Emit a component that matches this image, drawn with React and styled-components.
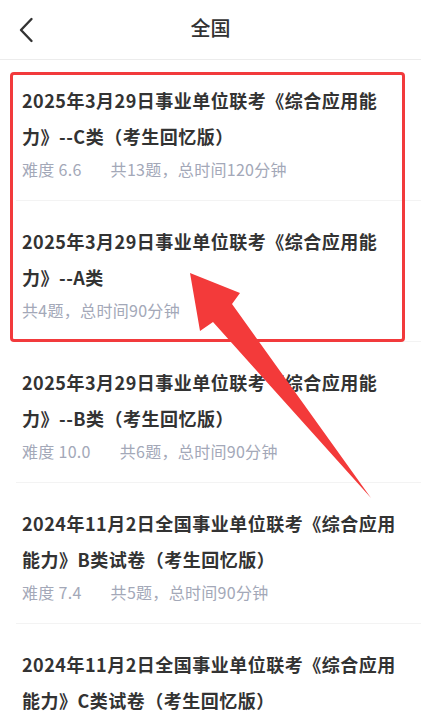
import React from "react";
import styled, { createGlobalStyle } from "styled-components";

const GlobalStyle = createGlobalStyle`
  html, body { margin: 0; padding: 0; background: #ffffff; }
  body { font-family: "Noto Sans CJK SC", "Noto Sans", sans-serif; }
  * { box-sizing: border-box; }
`;

const Page = styled.div`
  position: relative;
  width: 421px;
  height: 720px;
  overflow: hidden;
  background: #fff;
`;

const Header = styled.header`
  height: 60px;
  display: grid;
  grid-template-columns: 60px 1fr 60px;
  align-items: center;
  border-bottom: 1px solid #ececec;
`;

const BackButton = styled.button`
  border: 0;
  background: none;
  padding: 0 0 0 18px;
  height: 100%;
  display: flex;
  align-items: center;
  color: #333;
  cursor: pointer;
`;

const Title = styled.h1`
  margin: 0 0 3px;
  text-align: center;
  font-size: 20px;
  font-weight: 500;
  color: #333;
  line-height: 1;
`;

const List = styled.ul`
  list-style: none;
  margin: 0;
  padding: 0;
`;

const Item = styled.li`
  margin-left: 16px;
  padding: 22px 21px 19px 6px;
  border-bottom: 1px solid #f3f3f3;
`;

const ItemTitle = styled.div`
  font-size: 18px;
  font-weight: 700;
  line-height: 36px;
  color: #333;
  letter-spacing: 0.5px;
  line-break: strict;
`;

const Meta = styled.div`
  margin-top: 3px;
  display: flex;
  font-size: 16px;
  line-height: 24px;
  color: #a3a8b8;
  letter-spacing: 0.3px;
`;

const Difficulty = styled.span`
  margin-right: 29px;
`;

const Highlight = styled.div`
  position: absolute;
  left: 10px;
  top: 72px;
  width: 395px;
  height: 270px;
  border: 3px solid #f23a3c;
  border-radius: 4px;
  pointer-events: none;
`;

const ArrowLayer = styled.svg`
  position: absolute;
  left: 0;
  top: 0;
  pointer-events: none;
`;

const items = [
  {
    title: "2025年3月29日事业单位联考《综合应用能力\u2060》--C类（考生回忆版）",
    difficulty: "6.6",
    info: "共13题，总时间120分钟",
  },
  {
    title: "2025年3月29日事业单位联考《综合应用能力\u2060》--A类",
    info: "共4题，总时间90分钟",
  },
  {
    title: "2025年3月29日事业单位联考《综合应用能力\u2060》--B类（考生回忆版）",
    difficulty: "10.0",
    info: "共6题，总时间90分钟",
  },
  {
    title: "2024年11月2日全国事业单位联考《综合应用能力\u2060》B类试卷（考生回忆版）",
    difficulty: "7.4",
    info: "共5题，总时间90分钟",
  },
  {
    title: "2024年11月2日全国事业单位联考《综合应用能力\u2060》C类试卷（考生回忆版）",
    difficulty: "7.2",
    info: "共5题，总时间90分钟",
  },
];

export default function App() {
  return (
    <>
      <GlobalStyle />
      <Page>
        <Header>
          <BackButton aria-label="返回">
            <svg width="16" height="26" viewBox="0 0 16 26">
              <polyline
                points="13.5,2 3,13 13.5,24"
                fill="none"
                stroke="#333"
                strokeWidth="2.4"
                strokeLinecap="round"
                strokeLinejoin="round"
              />
            </svg>
          </BackButton>
          <Title>全国</Title>
          <span />
        </Header>
        <List>
          {items.map((it, i) => (
            <Item key={i}>
              <ItemTitle>{it.title}</ItemTitle>
              <Meta>
                {it.difficulty && <Difficulty>难度 {it.difficulty}</Difficulty>}
                <span>{it.info}</span>
              </Meta>
            </Item>
          ))}
        </List>
        <Highlight />
        <ArrowLayer width="421" height="720" viewBox="0 0 421 720">
          <polygon
            points="190,273 240,293 232,304 371,498 213,322 200,331"
            fill="#f33a3a"
          />
        </ArrowLayer>
      </Page>
    </>
  );
}
